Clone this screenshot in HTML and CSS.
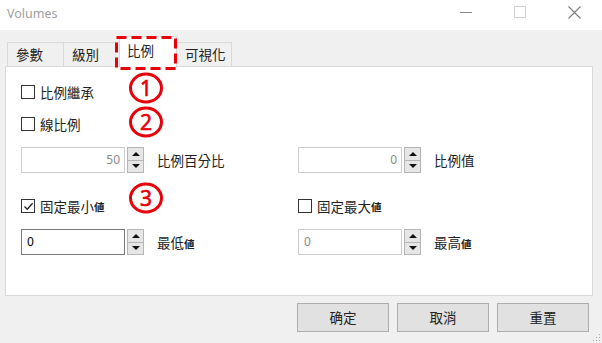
FILE: index.html
```html
<!DOCTYPE html>
<html lang="zh-Hant">
<head>
  <meta charset="UTF-8" />
  <title>Volumes</title>
  <link rel="stylesheet" href="styles.css">
</head>
<body>
  <div class="titlebar">
    <span class="title">Volumes</span>
    <div class="controls">
      <div class="ctrl"><svg width="12" height="12" viewBox="0 0 12 12"><line x1="0" y1="6.5" x2="12" y2="6.5" stroke="#8a8a8a" stroke-width="1"/></svg></div>
      <div class="ctrl"><svg width="12" height="12" viewBox="0 0 12 12"><rect x="0.5" y="0.5" width="11" height="11" fill="none" stroke="#d0d0d0" stroke-width="1"/></svg></div>
      <div class="ctrl"><svg width="13" height="13" viewBox="0 0 13 13"><path d="M0.5 0.5 L12.5 12.5 M12.5 0.5 L0.5 12.5" stroke="#7a7a7a" stroke-width="1.1"/></svg></div>
    </div>
  </div>

  <div class="tabs">
    <div class="tab w56">參數</div>
    <div class="tab w56">級別</div>
    <div class="tab active">比例</div>
    <div class="tab w55">可視化</div>
  </div>

  <div class="panel">
    <div class="line">
      <label class="check"><span class="box"></span>比例繼承</label>
    </div>
    <div class="line gap10">
      <label class="check"><span class="box"></span>線比例</label>
    </div>
    <div class="line tall gap12">
      <div class="cell spin">
        <div class="field right">50</div>
        <div class="arrows"><span class="arrow"><i class="up"></i></span><span class="arrow"><i class="down"></i></span></div>
        <span class="label">比例百分比</span>
      </div>
      <div class="cell spin">
        <div class="field right">0</div>
        <div class="arrows"><span class="arrow"><i class="up"></i></span><span class="arrow"><i class="down"></i></span></div>
        <span class="label">比例值</span>
      </div>
    </div>
    <div class="line gap22">
      <div class="cell">
        <label class="check"><span class="box"><svg width="11" height="11" viewBox="0 0 11 11"><path d="M1.5 5.5 L4.2 8.3 L9.6 2.2" fill="none" stroke="#222" stroke-width="1.3"/></svg></span>固定最小<span class="alt">値</span></label>
      </div>
      <div class="cell">
        <label class="check"><span class="box"></span>固定最大<span class="alt">値</span></label>
      </div>
    </div>
    <div class="line tall gap12">
      <div class="cell spin">
        <div class="field on">0</div>
        <div class="arrows"><span class="arrow"><i class="up"></i></span><span class="arrow"><i class="down"></i></span></div>
        <span class="label">最低<span class="alt">値</span></span>
      </div>
      <div class="cell spin">
        <div class="field">0</div>
        <div class="arrows"><span class="arrow"><i class="up"></i></span><span class="arrow"><i class="down"></i></span></div>
        <span class="label">最高<span class="alt">値</span></span>
      </div>
    </div>
  </div>

  <div class="buttons">
    <div class="btn">确定</div>
    <div class="btn">取消</div>
    <div class="btn">重置</div>
  </div>

  <!-- annotations drawn over the dialog -->
  <svg class="mark" width="62" height="34" viewBox="0 0 62 34">
    <rect x="1.5" y="1.5" width="59" height="31" fill="none" stroke="#e8000b" stroke-width="3" stroke-dasharray="10 5"/>
  </svg>
  <svg class="num n1" width="36" height="32" viewBox="0 0 36 32">
    <ellipse cx="18" cy="16" rx="15.5" ry="14" fill="none" stroke="#e8000b" stroke-width="3"/>
    <text x="18" y="23.5" text-anchor="middle">1</text>
  </svg>
  <svg class="num n2" width="36" height="32" viewBox="0 0 36 32">
    <ellipse cx="18" cy="16" rx="15.5" ry="14" fill="none" stroke="#e8000b" stroke-width="3"/>
    <text x="18" y="23.5" text-anchor="middle">2</text>
  </svg>
  <svg class="num n3" width="36" height="32" viewBox="0 0 36 32">
    <ellipse cx="18" cy="16" rx="15.5" ry="14" fill="none" stroke="#e8000b" stroke-width="3"/>
    <text x="18" y="23.5" text-anchor="middle">3</text>
  </svg>

  <svg class="grip" width="10" height="10" viewBox="0 0 10 10">
    <rect x="8" y="2" width="1" height="1" fill="#aaa"/>
    <rect x="5" y="5" width="1" height="1" fill="#aaa"/>
    <rect x="8" y="5" width="1" height="1" fill="#aaa"/>
    <rect x="2" y="8" width="1" height="1" fill="#aaa"/>
    <rect x="5" y="8" width="1" height="1" fill="#aaa"/>
    <rect x="8" y="8" width="1" height="1" fill="#aaa"/>
  </svg>
</body>
</html>
```

FILE: styles.css
```css
body {
  margin: 0;
  width: 602px;
  height: 343px;
  background-color: #f0f0f0;
  font-family: "Noto Sans CJK TC", "Noto Sans", sans-serif;
  font-size: 13.5px;
  color: #222;
  position: relative;
  overflow: hidden;
}
.titlebar {
  height: 30px;
  background: #fff;
  display: flex;
  align-items: flex-start;
}
.title {
  font-family: "Noto Sans", sans-serif;
  font-size: 12.5px;
  color: #a0a0a0;
  padding: 5px 0 0 7px;
}
.controls {
  margin-left: auto;
  display: flex;
  padding-right: 1px;
}
.ctrl {
  width: 54px;
  height: 24px;
  display: flex;
  align-items: center;
  justify-content: center;
}
.tabs {
  display: flex;
  align-items: flex-end;
  height: 36px;
  box-sizing: border-box;
  padding: 6px 0 0 7px;
}
.tab {
  height: 24px;
  box-sizing: border-box;
  border: 1px solid #d9d9d9;
  border-bottom: none;
  margin-right: -1px;
  padding-left: 8px;
  line-height: 22px;
  background: #f0f0f0;
}
.w56 { width: 57px; }
.w55 { width: 56px; }
.tab.active {
  width: 58px;
  height: 31px;
  margin-bottom: -1px;
  padding-left: 7px;
  line-height: 26px;
  background: #fff;
  position: relative;
  z-index: 1;
}
.panel {
  margin-left: 5px;
  width: 588px;
  height: 230px;
  box-sizing: border-box;
  border: 1px solid #d9d9d9;
  background: #fff;
  padding: 14px 0 0 15px;
}
.line {
  display: flex;
  align-items: center;
  height: 22px;
}
.line.tall { height: 26px; }
.gap10 { margin-top: 10px; }
.gap12 { margin-top: 12px; }
.gap22 { margin-top: 22px; }
.cell {
  width: 277px;
  display: flex;
  align-items: center;
}
.check {
  display: flex;
  align-items: center;
}
.box {
  width: 14px;
  height: 14px;
  box-sizing: border-box;
  border: 1px solid #333;
  background: #fff;
  margin-right: 5px;
  display: flex;
  align-items: center;
  justify-content: center;
}
.alt {
  font-size: 10.5px;
  font-weight: bold;
}
.spin .field {
  width: 104px;
  height: 26px;
  box-sizing: border-box;
  border: 1px solid #cccccc;
  background: #fff;
  font-family: "Noto Sans", sans-serif;
  font-size: 12px;
  line-height: 24px;
  padding: 0 4px 0 5px;
  color: #8a8a8a;
}
.field.right { text-align: right; }
.field.on {
  border-color: #7a7a7a;
  color: #000;
}
.arrows {
  margin-left: 2px;
  width: 17px;
  height: 26px;
  display: flex;
  flex-direction: column;
}
.arrow {
  flex: 1;
  border: 1px solid #b5b5b5;
  background: #e6e6e6;
  display: flex;
  align-items: center;
  justify-content: center;
}
.arrow + .arrow { border-top: none; }
.up {
  border-left: 4px solid transparent;
  border-right: 4px solid transparent;
  border-bottom: 4px solid #111;
}
.down {
  border-left: 4px solid transparent;
  border-right: 4px solid transparent;
  border-top: 4px solid #111;
}
.label { margin-left: 13px; }
.buttons {
  display: flex;
  justify-content: flex-end;
  gap: 8px;
  padding: 7px 13px 0 0;
}
.btn {
  width: 92px;
  height: 29px;
  box-sizing: border-box;
  border: 1px solid #adadad;
  background: #e1e1e1;
  text-align: center;
  line-height: 27px;
}
.mark {
  position: absolute;
  left: 115px;
  top: 36px;
  z-index: 5;
}
.num {
  position: absolute;
  left: 128px;
  z-index: 5;
}
.num text {
  font-family: "Noto Sans", sans-serif;
  font-size: 21px;
  fill: #e8000b;
  stroke: #e8000b;
  stroke-width: 0.6;
}
.n1 { top: 72px; }
.n2 { top: 106px; }
.n3 { top: 182px; }
.grip {
  position: absolute;
  right: 1px;
  bottom: 1px;
}
```
